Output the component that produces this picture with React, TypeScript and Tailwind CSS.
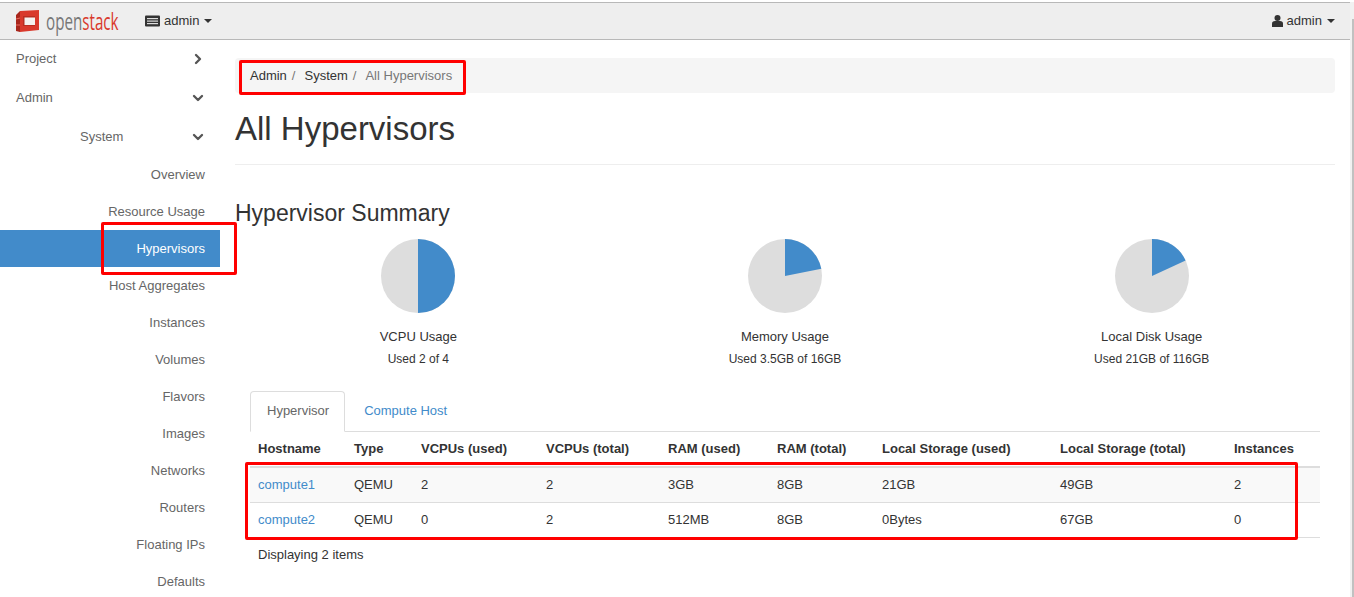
import { ChevronDown, ChevronRight } from 'lucide-react';

const subItems = ['Overview', 'Resource Usage', 'Hypervisors', 'Host Aggregates', 'Instances', 'Volumes', 'Flavors', 'Images', 'Networks', 'Routers', 'Floating IPs', 'Defaults'];

const charts = [
  { title: 'VCPU Usage', sub: 'Used 2 of 4', pct: 0.5 },
  { title: 'Memory Usage', sub: 'Used 3.5GB of 16GB', pct: 0.219 },
  { title: 'Local Disk Usage', sub: 'Used 21GB of 116GB', pct: 0.181 },
];

const columns = [
  { label: 'Hostname', width: 'w-[96px]' },
  { label: 'Type', width: 'w-[67px]' },
  { label: 'VCPUs (used)', width: 'w-[125px]' },
  { label: 'VCPUs (total)', width: 'w-[122px]' },
  { label: 'RAM (used)', width: 'w-[109px]' },
  { label: 'RAM (total)', width: 'w-[105px]' },
  { label: 'Local Storage (used)', width: 'w-[178px]' },
  { label: 'Local Storage (total)', width: 'w-[174px]' },
  { label: 'Instances', width: 'flex-1' },
];

const rows = [
  ['compute1', 'QEMU', '2', '2', '3GB', '8GB', '21GB', '49GB', '2'],
  ['compute2', 'QEMU', '0', '2', '512MB', '8GB', '0Bytes', '67GB', '0'],
];

function Pie({ pct }: { pct: number }) {
  const a = pct * 2 * Math.PI;
  const x = 37 + 37 * Math.sin(a);
  const y = 37 - 37 * Math.cos(a);
  return (
    <svg width="74" height="74" viewBox="0 0 74 74">
      <circle cx="37" cy="37" r="37" fill="#dddddd" />
      <path d={`M37 37 L37 0 A37 37 0 ${pct > 0.5 ? 1 : 0} 1 ${x} ${y} Z`} fill="#428bca" />
    </svg>
  );
}

function Logo() {
  return (
    <svg width="25" height="24" viewBox="0 0 25 24">
      <path d="M5 2 L24 1 L24 21 L5 23 Z" fill="#d9392c" />
      <path d="M1 6 L5 2 L5 23 L1 22 Z" fill="#a8261c" />
      <path d="M5 9 L1 10 M5 16 L1 16" stroke="#e8695e" strokeWidth="1" />
      <path d="M8 7 H20 V17 H8 Z" fill="#b92e22" />
      <path d="M9.5 8.5 H20 V16 H9.5 Z" fill="#f4f1ef" />
    </svg>
  );
}

export default function App() {
  return (
    <div className="relative h-[597px] w-[1354px] overflow-hidden bg-white text-[13px] text-[#333] font-['Liberation_Sans',Arial,sans-serif]">
      <header className="h-[38px] mt-[2px] flex items-center justify-between bg-[#eeeeee] border-y border-[#b8b8b8] pl-[15px] pr-[19px]">
        <div className="flex items-center">
          <Logo />
          <span className="ml-[6px] w-[77px] inline-block origin-left scale-x-[0.66] text-[23px] leading-none text-[#777] font-['Open_Sans',sans-serif]">
            open<span className="text-[#d9392c]">stack</span>
          </span>
          <svg className="ml-[22px]" width="15" height="12" viewBox="0 0 15 12">
            <rect x="0" y="0.5" width="15" height="11" rx="1" fill="#333" />
            <rect x="2" y="3" width="11" height="1.2" fill="#ddd" />
            <rect x="2" y="5.5" width="11" height="1.2" fill="#ddd" />
            <rect x="2" y="8" width="11" height="1.2" fill="#ddd" />
          </svg>
          <span className="ml-[4px]">admin</span>
          <span className="ml-[5px] border-x-[4px] border-t-[4px] border-x-transparent border-t-[#333]" />
        </div>
        <div className="flex items-center">
          <svg width="11" height="12" viewBox="0 0 11 12">
            <circle cx="5.5" cy="3" r="3" fill="#333" />
            <path d="M0 12 V8.5 Q0 6 3 6 H8 Q11 6 11 8.5 V12 Z" fill="#333" />
          </svg>
          <span className="ml-[4px]">admin</span>
          <span className="ml-[5px] border-x-[4px] border-t-[4px] border-x-transparent border-t-[#333]" />
        </div>
      </header>
      <div className="flex">
        <nav className="w-[220px] shrink-0 text-[#666]">
          <div className="h-[37px] flex items-center justify-between pl-[16px] pr-[14px]">
            <span>Project</span>
            <ChevronRight size={16} strokeWidth={3.5} className="text-[#555]" />
          </div>
          <div className="h-[40px] pt-[2px] flex items-center justify-between pl-[16px] pr-[14px]">
            <span>Admin</span>
            <ChevronDown size={16} strokeWidth={3.5} className="text-[#555]" />
          </div>
          <div className="h-[39px] flex items-center justify-between pl-[80px] pr-[14px]">
            <span>System</span>
            <ChevronDown size={16} strokeWidth={3.5} className="text-[#555]" />
          </div>
          {subItems.map((item) => (
            <div
              key={item}
              className={`h-[37px] flex items-center justify-end pr-[15px] ${item === 'Hypervisors' ? 'bg-[#428bca] text-white' : ''}`}
            >
              {item}
            </div>
          ))}
        </nav>
        <main className="flex-1 pl-[15px] pr-[19px] pt-[18px]">
          <div className="h-[35px] flex items-center bg-[#f5f5f5] rounded pl-[15px]">
            <span>Admin</span>
            <span className="ml-[5px] mr-[9px] text-[#777]">/</span>
            <span>System</span>
            <span className="ml-[5px] mr-[9px] text-[#777]">/</span>
            <span className="text-[#777]">All Hypervisors</span>
          </div>
          <h1 className="mt-[16px] h-[56px] text-[33px] leading-[40px] border-b border-[#eeeeee]">All Hypervisors</h1>
          <h2 className="mt-[33px] text-[23px] leading-[30px]">Hypervisor Summary</h2>
          <div className="mt-[11px] grid grid-cols-3">
            {charts.map((c) => (
              <div key={c.title} className="flex flex-col items-center">
                <Pie pct={c.pct} />
                <div className="mt-[15px] leading-[17px]">{c.title}</div>
                <div className="mt-[7px] text-[12px] leading-[15px]">{c.sub}</div>
              </div>
            ))}
          </div>
          <div className="mt-[24px] mx-[15px]">
            <div className="flex h-[41px] border-b border-[#dddddd]">
              <div className="h-[41px] pl-[16px] pr-[15px] pb-[2px] flex items-center border border-[#dddddd] border-b-white rounded-t text-[#666] bg-white">Hypervisor</div>
              <div className="px-[19px] flex items-center text-[#428bca]">Compute Host</div>
            </div>
            <div className="flex h-[36px] items-center border-b-2 border-[#dddddd] px-[8px] font-bold">
              {columns.map((c) => (
                <div key={c.label} className={c.width}>{c.label}</div>
              ))}
            </div>
            {rows.map((r, i) => (
              <div key={r[0]} className={`flex h-[35px] items-center border-b border-[#dddddd] px-[8px] ${i === 0 ? 'bg-[#f9f9f9]' : ''}`}>
                {r.map((v, j) => (
                  <div key={j} className={`${columns[j].width} ${j === 0 ? 'text-[#428bca]' : ''}`}>{v}</div>
                ))}
              </div>
            ))}
            <div className="mt-[7px] px-[8px]">Displaying 2 items</div>
          </div>
        </main>
      </div>
      {/* red annotation boxes drawn over the screenshot */}
      <div className="absolute left-[239px] top-[60px] w-[227px] h-[35px] rounded-[2px] border-[3px] border-[#ff0000]" />
      <div className="absolute left-[101px] top-[222px] w-[136px] h-[53px] rounded-[2px] border-[3px] border-[#ff0000]" />
      <div className="absolute left-[245px] top-[462px] w-[1053px] h-[78px] rounded-[2px] border-[3px] border-[#ff0000]" />
      {/* browser scrollbar caught at the edge of the screenshot */}
      <div className="absolute right-0 top-[2px] bottom-0 w-[4px] bg-[#f1f1f1]">
        <div className="absolute right-0 top-[17px] bottom-0 w-[2px] bg-[#c1c1c1]" />
      </div>
    </div>
  );
}
